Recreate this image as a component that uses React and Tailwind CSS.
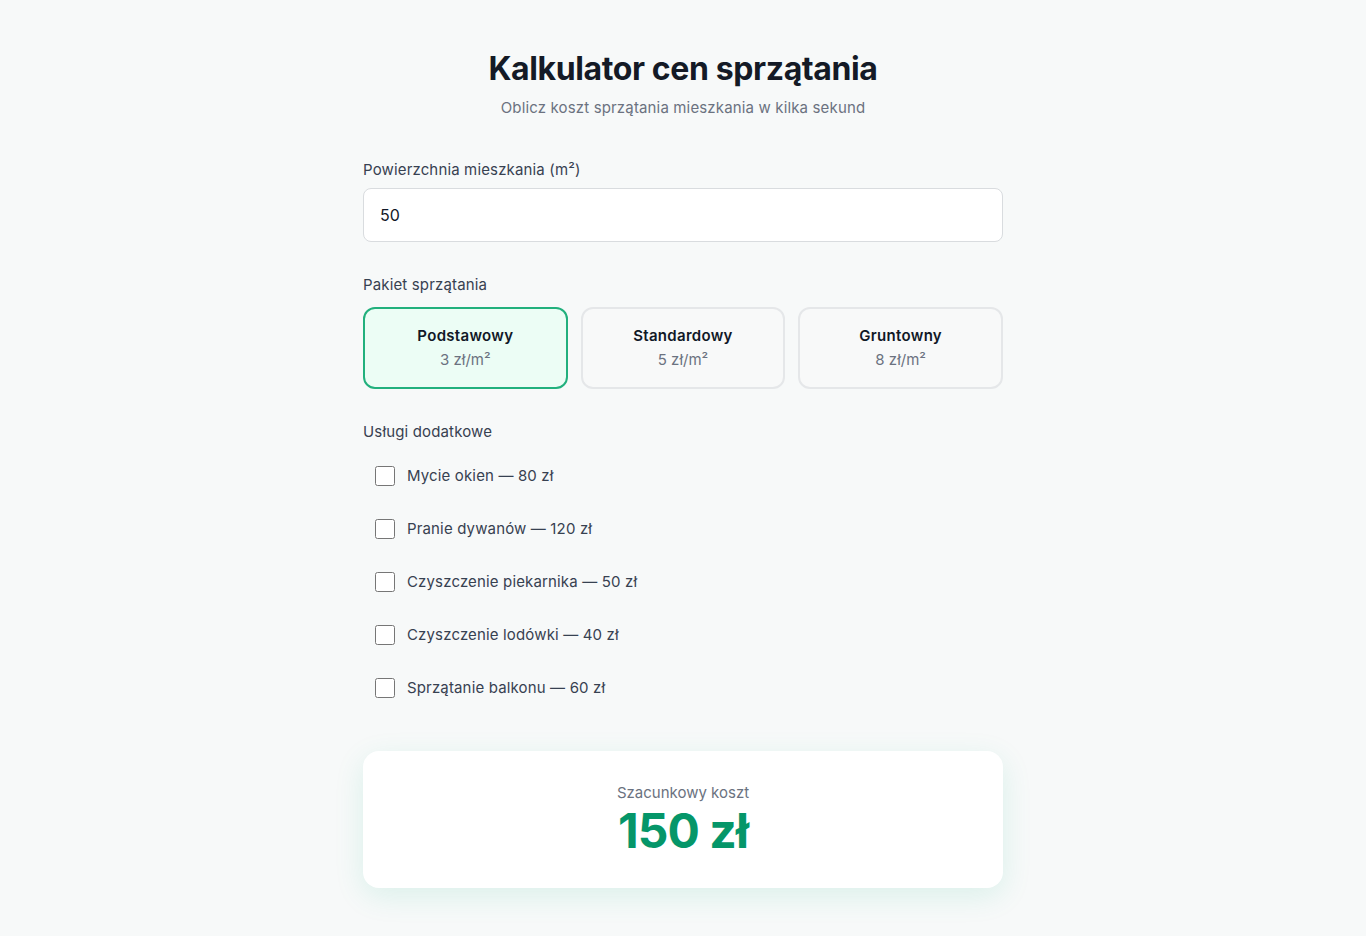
import { useState } from 'react'

const PACKAGES = [
  { id: 'basic', name: 'Podstawowy', rate: 3 },
  { id: 'standard', name: 'Standardowy', rate: 5 },
  { id: 'deep', name: 'Gruntowny', rate: 8 },
]

const EXTRAS = [
  { id: 'windows', name: 'Mycie okien', price: 80 },
  { id: 'carpets', name: 'Pranie dywanów', price: 120 },
  { id: 'oven', name: 'Czyszczenie piekarnika', price: 50 },
  { id: 'fridge', name: 'Czyszczenie lodówki', price: 40 },
  { id: 'balcony', name: 'Sprzątanie balkonu', price: 60 },
]

export default function App() {
  const [area, setArea] = useState('50')
  const [pkg, setPkg] = useState('basic')
  const [extras, setExtras] = useState([])

  const rate = PACKAGES.find((p) => p.id === pkg).rate
  const extrasTotal = EXTRAS.filter((e) => extras.includes(e.id)).reduce((s, e) => s + e.price, 0)
  const total = (Number(area) || 0) * rate + extrasTotal

  const toggle = (id) =>
    setExtras((prev) => (prev.includes(id) ? prev.filter((x) => x !== id) : [...prev, id]))

  return (
    <div className="min-h-screen bg-[#f7f9f9] font-['Inter','Noto_Sans',sans-serif] text-[#111827]">
      <div className="mx-auto w-[640px] pt-[49px] pb-12">
        {/* header */}
        <div className="text-center mb-[37px]">
          <h1 className="text-[32px] leading-[40px] font-bold tracking-[-0.012em] text-[#141a26]">
            Kalkulator cen sprzątania
          </h1>
          <p className="mt-[7px] text-[15px] leading-6 tracking-[0.01em] text-[#6b7280]">
            Oblicz koszt sprzątania mieszkania w kilka sekund
          </p>
        </div>

        {/* area */}
        <label className="block pt-px text-[15px] leading-6 tracking-[0.01em] text-[#374151] mb-[6px]">
          Powierzchnia mieszkania (m²)
        </label>
        <input
          type="number"
          value={area}
          onChange={(e) => setArea(e.target.value)}
          className="block w-full h-[54px] rounded-lg border border-[#d9dcdf] bg-white px-4 text-[16px] text-[#111827] focus:outline-none"
        />

        {/* packages */}
        <div className="mt-[30px] pt-px text-[15px] leading-6 tracking-[0.01em] text-[#374151] mb-[10px]">Pakiet sprzątania</div>
        <div className="grid grid-cols-3 gap-[13px]">
          {PACKAGES.map((p) => {
            const active = p.id === pkg
            return (
              <button
                key={p.id}
                onClick={() => setPkg(p.id)}
                className={
                  active
                    ? 'rounded-xl border-2 border-[#22b07d] bg-[#ecfdf5] py-[15px] text-center'
                    : 'rounded-xl border-2 border-[#e5e7e9] bg-[#f8f9f9] py-[15px] text-center'
                }
              >
                <div className="text-[15px] leading-6 font-semibold tracking-[0.02em] text-[#111827]">{p.name}</div>
                <div className="text-[15px] leading-6 text-[#6b7280]">{p.rate} zł/m²</div>
              </button>
            )
          })}
        </div>

        {/* extras */}
        <div className="mt-[30px] pt-px text-[15px] leading-6 tracking-[0.01em] text-[#374151] mb-[8px]">Usługi dodatkowe</div>
        <div className="flex flex-col gap-[5px]">
          {EXTRAS.map((e) => (
            <label key={e.id} className="flex items-center gap-3 px-3 py-3 cursor-pointer">
              <input
                type="checkbox"
                checked={extras.includes(e.id)}
                onChange={() => toggle(e.id)}
                className="h-5 w-5 rounded-[3px] border border-[#767676] accent-[#10b981]"
              />
              <span className="text-[15px] leading-6 tracking-[0.01em] text-[#374151]">
                {e.name} — {e.price} zł
              </span>
            </label>
          ))}
        </div>

        {/* result */}
        <div className="mt-[39px] rounded-2xl bg-white px-8 pt-8 pb-[33px] text-center shadow-[0_8px_30px_rgba(16,185,129,0.12)]">
          <div className="text-[15px] leading-5 text-[#6b7280]">Szacunkowy koszt</div>
          <div className="mt-1 text-[48px] leading-[48px] font-bold tracking-[-0.02em] text-[#059669]">{total} zł</div>
        </div>
      </div>
    </div>
  )
}
